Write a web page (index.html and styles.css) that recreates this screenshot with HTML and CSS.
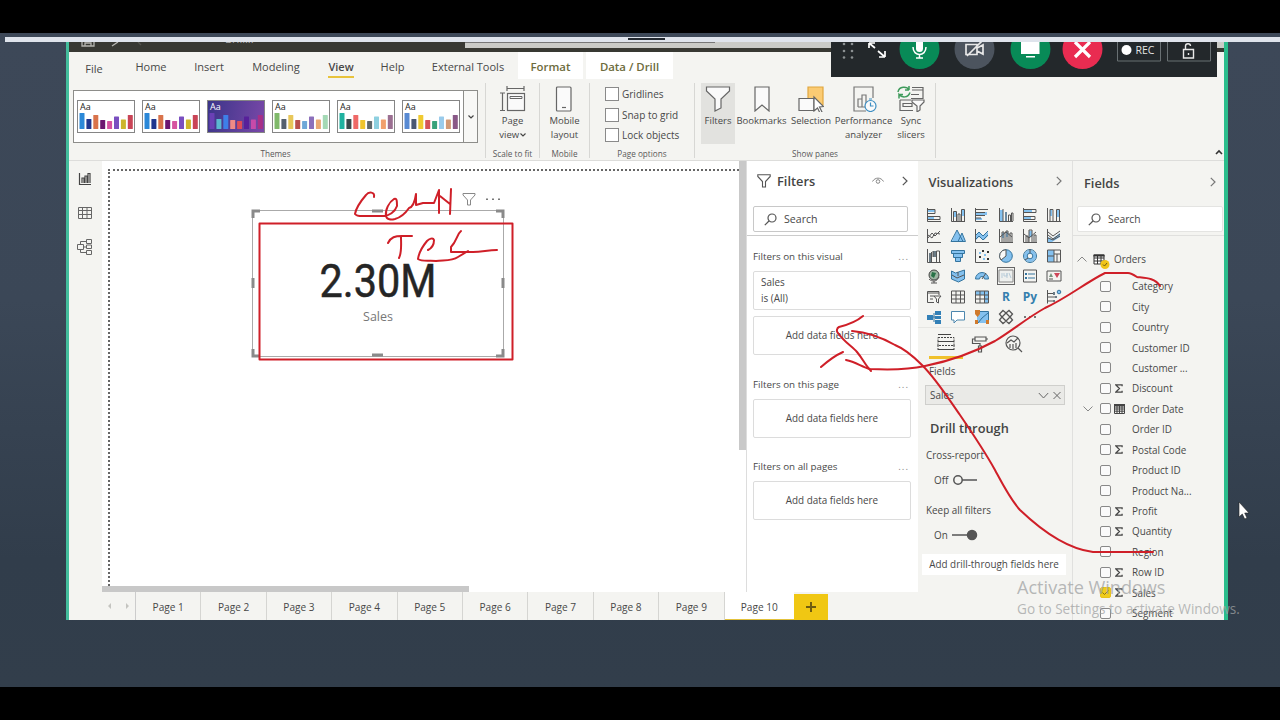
FILE: index.html
```
<!DOCTYPE html>
<html lang="en">
<head>
    <meta charset="UTF-8">
    <meta name="viewport" content="width=device-width, initial-scale=1.0">
    <title>Sales report</title>
    <link rel="stylesheet" href="styles.css">
</head>
<body>
    <div class="desktop">
        <div class="top-line"></div>
        <div class="window">
            <div class="titlebar">
                <svg class="title-icons" width="396" height="10" viewBox="0 0 396 10"><g fill="none" stroke="#b5b5b0" stroke-width="1.3"><path d="M13 0v4h12V0M16 4V1h6v3M43 4l6-4"/><path d="M69 0l3 3" stroke="#55554f"/></g></svg>
                <span class="title-text">Brill...</span>
                <div class="title-search"></div>
            </div>

            <nav class="tabs">
                <a class="tab file">File</a>
                <a class="tab home">Home</a>
                <a class="tab insert">Insert</a>
                <a class="tab modeling">Modeling</a>
                <a class="tab view active"><b>View</b></a>
                <a class="tab help">Help</a>
                <a class="tab external">External Tools</a>
                <a class="tab format tool">Format</a>
                <a class="tab drill tool">Data / Drill</a>
            </nav>

            <div class="ribbon">
                <div class="group themes">
                    <div class="gallery">
                        <div class="thumbs" id="thumbs"></div>
                        <div class="more"><svg width="6" height="4" viewBox="0 0 6 4"><path d="M.5.5L3 3 5.5.5" fill="none" stroke="#444" stroke-width="1.2"/></svg></div>
                    </div>
                    <div class="caption">Themes</div>
                </div>
                <div class="group scale">
                    <div class="tools">
                        <div class="tool-btn">
                            <svg width="26" height="26" viewBox="0 0 26 26" fill="none" stroke="#666" stroke-width="1.2"><path d="M7 2.500h17M7 0v5M24 0v5M2.500 7v17M0 7h5M0 24.500h5"/><rect x="7.500" y="7.500" width="17" height="17" fill="#fafafa"/><path d="M10 10.500h12v2H10z" stroke-width="1"/></svg>
                            <span>Page<br>view <svg width="6" height="4" viewBox="0 0 6 4"><path d="M.5.5L3 3 5.500.5" fill="none" stroke="#444" stroke-width="1.1"/></svg></span>
                        </div>
                    </div>
                    <div class="caption">Scale to fit</div>
                </div>
                <div class="group mobile">
                    <div class="tools">
                        <div class="tool-btn">
                            <svg width="26" height="26" viewBox="0 0 26 26" fill="none" stroke="#666" stroke-width="1.2"><rect x="5.500" y="1" width="14.500" height="24" rx="1" fill="#fafafa"/><path d="M11 21.500h4"/></svg>
                            <span>Mobile<br>layout</span>
                        </div>
                    </div>
                    <div class="caption">Mobile</div>
                </div>
                <div class="group options">
                    <div class="checks">
                        <label><i></i>Gridlines</label>
                        <label><i></i>Snap to grid</label>
                        <label><i></i>Lock objects</label>
                    </div>
                    <div class="caption">Page options</div>
                </div>
                <div class="group panes">
                    <div class="tools">
                        <div class="tool-btn w34 on">
                            <svg width="26" height="26" viewBox="0 0 26 26" fill="#fafafa" stroke="#666" stroke-width="1.2"><path d="M1.500 1h23v4l-8.500 8v9l-6 3V13L1.500 5z"/></svg>
                            <span>Filters</span>
                        </div>
                        <div class="tool-btn w53">
                            <svg width="26" height="26" viewBox="0 0 26 26" fill="#fafafa" stroke="#666" stroke-width="1.2"><path d="M6 1h14v24l-7-6-7 6z"/></svg>
                            <span>Bookmarks</span>
                        </div>
                        <div class="tool-btn w46">
                            <svg width="26" height="26" viewBox="0 0 26 26" fill="none" stroke="#666" stroke-width="1.200"><path d="M10 1h15v18H10z" fill="#fbcb73" stroke="#e0a63e"/><path d="M1 12.500h15v12H1z" fill="#fafafa"/><path d="M16 11v14l3.500-3 2.500 5 2-1-2.500-5 4-.5z" fill="#fff"/></svg>
                            <span>Selection</span>
                        </div>
                        <div class="tool-btn w59">
                            <svg width="26" height="26" viewBox="0 0 26 26" fill="none" stroke="#777" stroke-width="1.200"><path d="M22 12V1H3v24h12"/><path d="M7 21V13h4v8M11 21V9h4v12M7 21h8" /><circle cx="19.500" cy="20" r="5.500" fill="#fafafa" stroke="#3d8ec2"/><path d="M19.500 16.500V20h3M18 13h3" stroke="#3d8ec2"/></svg>
                            <span>Performance<br>analyzer</span>
                        </div>
                        <div class="tool-btn w36">
                            <svg width="28" height="26" viewBox="0 0 28 26" fill="none" stroke="#666" stroke-width="1.200"><path d="M15 1.500h11v11H14M15 4h11M3 14v10.500h13M14 8.500h8M3 14h11M6 17.500h9v3H6z"/><path d="M1 6C2 0 10 0 12 4V0M12 4H8M13 6.500C11 12 5 12 2 8.500v4M2 8.500h4" stroke="#3f9b5c" stroke-width="1.500"/><path d="M15 14h12v2l-4 4v4l-3 2v-6l-5-4z" fill="#fafafa"/></svg>
                            <span>Sync<br>slicers</span>
                        </div>
                    </div>
                    <div class="caption">Show panes</div>
                </div>
                <svg class="collapse" width="8" height="6" viewBox="0 0 8 6"><path d="M1 5l3-3 3 3" fill="none" stroke="#333" stroke-width="1.600"/></svg>
            </div>

            <div class="body">
                <div class="rail">
                    <svg width="14" height="14" viewBox="0 0 14 14" fill="none" stroke="#444" stroke-width="1.200"><path d="M1.500 1v11.500H13M4 11V6h2v5M7 11V4h2v7M10 11V1.500h2V11"/></svg>
                    <svg width="14" height="14" viewBox="0 0 14 14" fill="none" stroke="#666"><path d="M.5 1.500h13v11H.5zM.5 4.500h13M.5 8.500h13M4.500 1.500v11M9 1.500v11"/></svg>
                    <svg width="16" height="16" viewBox="0 0 16 16" fill="none" stroke="#666"><path d="M.5 5.500h6v5h-6zM9.500.5h5v4h-5zM9.500 6h5v3.500h-5zM9.500 11.500h5v4h-5zM3.500 5V2.500h6M6.500 8h3M3.500 11v2.500h6"/></svg>
                </div>

                <div class="main">
                    <div class="upper">
                        <div class="canvas">
                            <div class="page-area"></div>
                            <div class="vscroll"></div>
                            <div class="visual">
                                <div class="visual-tools">
                                    <svg width="14" height="13" viewBox="0 0 14 13" fill="none" stroke="#888"><path d="M1 .5h12v1.500L8.500 7v5h-3V7L1 2z"/></svg>
                                    <svg width="14" height="3" viewBox="0 0 14 3" fill="#777"><path d="M0 .5h2v1.500H0zM6 .5h2v1.500H6zM12 .5h2v1.500h-2z"/></svg>
                                </div>
                                <div class="value">2.30M</div>
                                <div class="measure">Sales</div>
                                <svg class="handles" width="254" height="149" viewBox="0 0 254 149" fill="none" stroke="#8a8a8a" stroke-width="3"><path d="M2 9V2h7M245 2h7v7M2 140v7h7M252 140v7h-7M121 2h11M121 146h11M2 69v10M252 69v10"/></svg>
                            </div>
                        </div>

                        <section class="filters">
                            <header>
                                <svg width="14" height="14" viewBox="0 0 14 14" fill="none" stroke="#555" stroke-width="1.100"><path d="M.8.8h12.400v1.700L8.500 7.500V13h-3V7.500L.8 2.500z"/></svg>
                                <h2>Filters</h2>
                                <svg class="eye" width="12" height="8" viewBox="0 0 12 8" fill="none" stroke="#888"><path d="M.5 4.500C3 0 9 0 11.500 4.500"/><circle cx="6" cy="4.500" r="1.800"/></svg>
                                <svg width="6" height="10" viewBox="0 0 6 10"><path d="M.8.8L5 5 .8 9.200" fill="none" stroke="#555" stroke-width="1.200"/></svg>
                            </header>
                            <div class="search"><svg width="13" height="13" viewBox="0 0 13 13" fill="none" stroke="#555" stroke-width="1.200"><circle cx="8" cy="5" r="4"/><path d="M5 8L.8 12.200"/></svg>Search</div>
                            <div class="filter-list">
                                <h3>Filters on this visual<span>...</span></h3>
                                <div class="card applied">Sales<br>is (All)</div>
                                <div class="card">Add data fields here</div>
                                <h3>Filters on this page<span>...</span></h3>
                                <div class="card">Add data fields here</div>
                                <h3>Filters on all pages<span>...</span></h3>
                                <div class="card">Add data fields here</div>
                            </div>
                        </section>
                    </div>

                    <div class="pages">
                        <div class="arrows"><svg width="22" height="6" viewBox="0 0 22 6" fill="#c4c4c0"><path d="M3 0v6L0 3zM18 0v6l3-3z"/></svg></div>
                        <span>Page 1</span><span>Page 2</span><span>Page 3</span><span>Page 4</span><span>Page 5</span><span>Page 6</span><span>Page 7</span><span>Page 8</span><span>Page 9</span>
                        <span class="current">Page 10</span>
                        <div class="add"><svg width="10" height="10" viewBox="0 0 10 10"><path d="M5 0v10M0 5h10" stroke="#6e5c10" stroke-width="2"/></svg></div>
                    </div>
                </div>

                <section class="viz">
                    <header><h2>Visualizations</h2><svg width="6" height="10" viewBox="0 0 6 10"><path d="M.8.8L5 5 .8 9.200" fill="none" stroke="#777" stroke-width="1.200"/></svg></header>
                    <div class="viz-grid">
                        <!-- bars and columns -->
                        <svg viewBox="0 0 16 16"><path class="b" d="M2 2h7v3H2zM2 10h6v3H2z"/><path class="k" d="M1.500 1v13.500H15M2 2.500h7v4H2M2 9.500h12v3H2"/></svg>
                        <svg viewBox="0 0 16 16"><path class="b" d="M4 4h2v6H4zM12 3h2v6h-2z"/><path class="k" d="M1.500 1v13.500H15M3.500 14V4.500h3V14M8 14V7h2v7M11.500 14V2.500h3V14"/></svg>
                        <svg viewBox="0 0 16 16"><path class="b" d="M2 5h11v3H2zM2 11h6v2H2z"/><path class="k" d="M1.500 1v13.500H13M2 2.500h12M2 5.500h9M2 8.500h9M2 11h5"/></svg>
                        <svg viewBox="0 0 16 16"><path class="b" d="M2 3h3v11H2zM7 5h2v9H7z"/><path class="k" d="M1.500 1v13.500H15M5 2v12M8 14V5M10.500 14V8h2v6M13.500 14V6h1.500v8"/></svg>
                        <svg viewBox="0 0 16 16"><path class="b" d="M2 2h8v3H2zM2 10h7v3H2z"/><path class="k" d="M1.500 1v13.500H15M2 2.500h12v3H2M2 9.500h11v3H2"/></svg>
                        <svg viewBox="0 0 16 16"><path class="b" d="M4 3h2v6H4zM11 2h2v8h-2z"/><path class="k" d="M1.500 1v13.500H15M4 14V2.500h3V14M10.500 14V2.500h3V14"/></svg>
                        <!-- lines and areas -->
                        <svg viewBox="0 0 16 16"><path class="k" d="M1.500 1v13.500H15M2 10l4-5 3 3 5-5M2 7l4 3 3-5 5 1"/></svg>
                        <svg viewBox="0 0 16 16"><path class="b" d="M2 13l5-11 3 6 2-3 3 8z"/><path class="u" d="M1 13.500L7 2l6 11.500zM8 13.500L12 5l3.500 8.500z"/></svg>
                        <svg viewBox="0 0 16 16"><path class="b" d="M2 7l3-3 4 4 5-4v4l-4 4-5-3-3 3z"/><path class="k" d="M1.500 1v13.500H15"/><path class="u" d="M2 7l3-3 4 4 5-5M2 11l3-3 4 4 5-5"/></svg>
                        <svg viewBox="0 0 16 16"><path class="b" d="M4 5h2v5H4zM8 4h2v5H8z"/><path class="k" d="M1.500 1v13.500H15M4 14V4h2v10M8 14V3h2v11M12 14V5h2v9M2 9l6-5 6 5"/></svg>
                        <svg viewBox="0 0 16 16"><path class="b" d="M7 3h3v6H7z"/><path class="k" d="M1.500 1v13.500H15M4 14V8h2v6M7 14V2h3v12M12 14V7h2v7M2 6l5 4 7-6"/></svg>
                        <svg viewBox="0 0 16 16"><path class="b" d="M2 9l4 2 8-6v4l-8 5H2z"/><path class="k" d="M1.500 1v13.500H15M2 4l5 4 7-5M2 7l5 4 7-5M2 10l5 2 7-4"/></svg>
                        <!-- waterfall, funnel, scatter, pie, donut, treemap -->
                        <svg viewBox="0 0 16 16"><path class="g" d="M3 5h2v9H3zM7 3h3v6H7z"/><path class="k" d="M1.500 1v13.500H15M5.500 4v10M7 9V3M10.500 14V3h3v11"/></svg>
                        <svg viewBox="0 0 16 16"><path class="u bb" d="M1.500 2.500h13v3h-13zM3.500 5.500h9v4h-9zM5.500 9.500h5v4h-5z"/></svg>
                        <svg viewBox="0 0 16 16"><path class="k" d="M1.500 1v13.500H15"/><path d="M8 2h2v2H8zM5 8h2v2H5zM13 3h2v2h-2zM13 10h2v2h-2z" fill="#333"/><path class="b" d="M5 4h2v2H5zM9 10h2v2H9zM10 6h2v2h-2z"/></svg>
                        <svg viewBox="0 0 16 16"><circle cx="8" cy="8" r="6.300" class="u bb"/><path class="k" d="M8 8V1.700A6.300 6.300 0 0 0 3 12z" style="fill:#fafafa"/></svg>
                        <svg viewBox="0 0 16 16"><circle cx="8" cy="8" r="4.500" fill="none" stroke="#84c1ef" stroke-width="3"/><circle class="u" cx="8" cy="8" r="6.500"/><circle class="u" cx="8" cy="8" r="2.800"/><path class="k" d="M8 1v4M3 12l3-2"/></svg>
                        <svg viewBox="0 0 16 16"><path class="b" d="M1 2h7v12H1z"/><path class="k" d="M1.500 2h13v12h-13zM8 2v12M2 8h6M8 6h6M11 6v8"/></svg>
                        <!-- maps, gauge, cards, kpi -->
                        <svg viewBox="0 0 16 16"><circle cx="8" cy="7" r="5" fill="#9eb5a2" stroke="#444"/><path class="k" d="M3 11c3 3 8 3 10-2M8 13v2M5 15h6"/><path d="M6 4l4 1-2 5-3-2z" fill="#287247"/></svg>
                        <svg viewBox="0 0 16 16"><path class="u bb" d="M1.500 3l4 2 3-1 6-2v9l-6 3-7-3z"/><path class="k" d="M2 7l5 3 7-3M8 4v4"/></svg>
                        <svg viewBox="0 0 16 16"><path class="u bb" d="M1.500 11a6.500 6.500 0 0 1 13 0h-4a2.500 2.500 0 0 0-5 0z"/><path class="k" d="M8 11l4-6"/></svg>
                        <svg class="picked" viewBox="0 0 16 16"><path d="M1 2h14v12H1z" fill="#eef0ee" stroke="#888"/><path d="M4 5v5M6 5v3h3V5v5M11 5l2 5" stroke="#b7cbd8" fill="none"/></svg>
                        <svg viewBox="0 0 16 16"><path class="k" d="M1.500 2h13v12h-13z"/><path class="u" d="M4 5v2M4 9v2" stroke-width="2"/><path class="u" d="M6 6h7M6 10h7"/></svg>
                        <svg viewBox="0 0 16 16"><path class="k" d="M1 3h14v10H1z"/><path d="M3 9l2-4 2 4z" fill="#77947d"/><path d="M8 5h6l-3 5z" fill="#ce4759"/><path class="k" d="M3 11h4"/></svg>
                        <!-- slicer, tables, scripts -->
                        <svg viewBox="0 0 16 16"><path class="k" d="M13 6V2.500H1.500v11H8M2 4h11M4 7h4M4 10h3M8 7h7l-2.500 3v4l-2-1v-3z"/></svg>
                        <svg viewBox="0 0 16 16"><path class="k" d="M1.500 2h13v12h-13zM1.500 6h13M1.500 10h13M6 2v12M10.500 2v12"/></svg>
                        <svg viewBox="0 0 16 16"><path class="b" d="M1 2h14v4H1zM10 6h4v8h-4z"/><path class="k" d="M1.500 2h13v12h-13zM1.500 6h13M1.500 10h13M6 2v12M10.500 2v12"/></svg>
                        <b>R</b>
                        <b>Py</b>
                        <svg viewBox="0 0 16 16"><path class="k" d="M1.500 1v13.500M2 4.500h6M2 8h9M2 12h5"/><path class="g" d="M7 3h2v3H7zM9 7h2v2H9zM7 11h2v2H7z"/><circle class="u bb" cx="13" cy="3" r="1.800"/></svg>
                        <!-- AI visuals -->
                        <svg viewBox="0 0 16 16"><path d="M1 6h6v5H1zM9 2h6v4H9zM9 7h6v3H9zM9 11h6v4H9z" fill="#3280b7"/><path class="u" d="M7 8h2M8 4v9"/></svg>
                        <svg viewBox="0 0 16 16"><path d="M1.500 2.500h13v8.500H7l-3 3v-3H1.500z" fill="#fff" stroke="#4d87ae"/></svg>
                        <svg viewBox="0 0 16 16"><path class="b" d="M3 3h11v11H3z"/><path class="u" d="M5 2.500h9.500V14M4 14l4-5 6-5"/><path d="M1 1h5v4L3.500 8 1 5zM12 11h3v4h-3zM1 11h3v4H1z" fill="#d07a2c"/></svg>
                        <svg viewBox="0 0 16 16"><path class="k" stroke-width="1.300" d="M5 1.500L8 4l3-2.500L14.500 5 12 8l2.500 3-3.500 3.500L8 12l-3 2.500L1.500 11 4 8 1.500 5zM8 4l4 4-4 4-4-4z"/></svg>
                        <svg viewBox="0 0 16 16"><path d="M2 7h2v2H2zM7 7h2v2H7zM12 7h2v2h-2z" fill="#777"/></svg>
                    </div>
                    <div class="viz-tabs">
                        <div class="sel"><svg width="18" height="18" viewBox="0 0 18 18" fill="none" stroke="#444"><path d="M1 1.500h13M1 16.500h16" stroke-width="1.200"/><path d="M1 4.500h16v4H1zM1 8.500h16v4H1zM1 12v5M17 12v5" stroke-dasharray="2 1"/></svg></div>
                        <div><svg width="18" height="18" viewBox="0 0 18 18" fill="none" stroke="#555" stroke-width="1.200"><path d="M4 2h11v4H4zM4 4H1.500v4.500H9V11M15 4h2M7.500 11h3v6h-3z"/></svg></div>
                        <div><svg width="18" height="18" viewBox="0 0 18 18" fill="none" stroke="#555" stroke-width="1.200"><circle cx="8" cy="8" r="7"/><path d="M13 13l4 4M2 8l4-3 3 2 4-4M5 13V9M8 14V9M11 13V8"/></svg></div>
                    </div>
                    <div class="wells">
                        <p class="well-name">Fields</p>
                        <div class="well">Sales<svg width="24" height="9" viewBox="0 0 24 9" fill="none" stroke="#666"><path d="M.8 2L5.500 7l4.700-5M15.500 1l7 7M22.500 1l-7 7"/></svg></div>
                        <h2>Drill through</h2>
                        <p class="cross">Cross-report</p>
                        <div class="toggle">Off<svg width="26" height="12" viewBox="0 0 26 12" fill="none" stroke="#555" stroke-width="1.500"><circle cx="6" cy="6" r="4.200"/><path d="M10 6h15"/></svg></div>
                        <p class="keep">Keep all filters</p>
                        <div class="toggle">On<svg width="26" height="12" viewBox="0 0 26 12" stroke="#555" stroke-width="1.500"><circle cx="20" cy="6" r="4.500" fill="#555"/><path d="M0 6h16"/></svg></div>
                        <div class="drop">Add drill-through fields here</div>
                    </div>
                </section>

                <section class="fields">
                    <header><h2>Fields</h2><svg width="6" height="10" viewBox="0 0 6 10"><path d="M.8.8L5 5 .8 9.200" fill="none" stroke="#777" stroke-width="1.200"/></svg></header>
                    <div class="search"><svg width="13" height="13" viewBox="0 0 13 13" fill="none" stroke="#555" stroke-width="1.200"><circle cx="8" cy="5" r="4"/><path d="M5 8L.8 12.200"/></svg>Search</div>
                    <div class="table-name">
                        <svg width="10" height="6" viewBox="0 0 10 6"><path d="M.5 5.500L5 1l4.500 4.500" fill="none" stroke="#888"/></svg>
                        <svg width="18" height="16" viewBox="0 0 18 16"><path d="M1 2h10v9H1zM1 5h10M1 8h10M4.500 2v9M8 2v9" fill="#fff" stroke="#333"/><path d="M.5 1.500h11v2H.5z" fill="#333"/><circle cx="12" cy="11.500" r="4.500" fill="#f0c419"/><path d="M10 11.500l1.500 1.500 2.500-3" fill="none" stroke="#6e5c10"/></svg>
                        Orders
                    </div>
                    <div id="fields"></div>
                </section>
            </div>
        </div>

        <div class="meeting">
            <svg width="386" height="35" viewBox="0 0 386 35">
                <g fill="#8b9092"><circle cx="13" cy="2" r="1.300"/><circle cx="21" cy="2" r="1.300"/><circle cx="13" cy="9" r="1.300"/><circle cx="21" cy="9" r="1.300"/><circle cx="13" cy="15.500" r="1.300"/><circle cx="21" cy="15.500" r="1.300"/></g>
                <path d="M38 1h6M38 1v5M38 1l6 5M54 15h-6M54 15V9M54 15l-7-6" fill="none" stroke="#fff" stroke-width="1.700"/>
                <g><circle cx="88.500" cy="7" r="20" fill="#088a57"/><circle cx="143.500" cy="7" r="20" fill="#4c545e"/><circle cx="199.500" cy="7" r="20" fill="#088a57"/><circle cx="251.500" cy="7" r="20" fill="#e92c51"/></g>
                <rect x="85" y="-6" width="7" height="16" rx="3.500" fill="#fff"/><path d="M82 5c0 10 13 10 13 0M88.500 12v4M85 16h7" fill="none" stroke="#fff" stroke-width="1.500"/>
                <path d="M135 2.500h11v10h-11zM146 6l6-3v9l-6-3M136 14L152-2" fill="none" stroke="#e8e8e8" stroke-width="1.700"/>
                <path d="M190-5h18.500v17H190zM195 14h9v1.500h-9z" fill="#fff"/>
                <path d="M244 0l15 15M259 0l-15 15" stroke="#fff" stroke-width="3.200"/>
                <path d="M286.500-1v20h43v-20M336.500-1v20h43v-20" fill="none" stroke="#697073"/>
                <circle cx="295.500" cy="8" r="5" fill="#fff"/><text x="304.500" y="11.500">REC</text>
                <path d="M352.500 7.500h10v8.500h-10zM354.500 7V4c0-3 5-3 5 0M357.500 11v2" fill="none" stroke="#e8e8e8" stroke-width="1.400"/>
            </svg>
        </div>

        <!-- pen annotations -->
        <svg class="ink" width="1280" height="720" viewBox="0 0 1280 720">
            <rect x="259.500" y="223.500" width="253" height="136"/>
            <path d="M374 197c1-5-5-6-8-2-6 7-10 13-11 19 2 3 7 2 12 2h16c6 0 12-4 14-10 0-5 0-8-3-7-5 3-9 11-8 17 1 4 5 4 9 3 7-2 12-8 14-11 4-1 6-7 7-14v11l7-2h11l5-13v23M440 196l10 8M451 189l-1 25"/>
            <path d="M388 243c3-6 7-7 14-7h10M401 237c0 7 1 15-2 21M428 250c4-2 6-5 6-10-1-3-5-1-7 1-5 6-8 11-9 18 4 3 12 1 18 2 9-1 16 0 22-4l10-6M461 231c-4 3-4 10-10 16v5h22c9 0 15-2 24-2"/>
            <path d="M1153 552h-60c-25-3-52-22-73-42-10-11-18-27-25-40-10-18-22-36-35-55-14-20-24-36-38-50-8-8-17-16-27-20-14-8-30-13-43-14M863 316c-7 6-16 9-24 11-2 1-3 4-1 6 6 9 14 13 19 19 6 7 8 13 14 19"/>
            <path d="M1160 286c-5-8-14-8-23-9-3-2-6-4-9-4h-23c-20 10-38 25-60 35-18 10-32 22-50 33-22 12-45 20-70 25-18 4-36 4-55 3-8-2-14-7-24-9M821 367c8-7 13-11 22-15"/>
        </svg>

        <div class="watermark">
            <div>Activate Windows</div>
            <p>Go to Settings to activate Windows.</p>
        </div>
        <svg class="cursor" width="12" height="19" viewBox="0 0 12 19"><path d="M1 1v15l3.300-3 2.400 5 2.300-1-2.300-5H11z" fill="#fff" stroke="#222" stroke-width=".6"/></svg>
    </div>

    <script>
        const palettes = [
            ["#2b88d8", "#20368f", "#d9734b", "#6b1670", "#d652a0", "#7a4fc0", "#cdb52a", "#c94456"],
            ["#2b88d8", "#20368f", "#d9734b", "#6b1670", "#d652a0", "#7a4fc0", "#cdb52a", "#c94456"],
            ["#6a40b5", "#5bb8d0", "#3e7fe8", "#f08a86", "#dd4c59", "#57209a", "#c74aa9", "#a82f86"],
            ["#80b96b", "#55606e", "#e8c75a", "#b9504d", "#6fa7d8", "#8c70bb", "#e9a873", "#a4d9b5"],
            ["#20b2a0", "#3b494b", "#ef6967", "#f0c52e", "#60696b", "#8ed0e0", "#f1a06d", "#9b6f91"],
            ["#588ad3", "#4b5872", "#f0ca30", "#d55357", "#38a27b", "#9acbeb", "#d29a75", "#895887"]
        ];
        const tops = [12, 18, 14, 19, 20, 15.5, 18.5, 14];

        document.getElementById("thumbs").innerHTML = palettes.map((colors, n) => {
            const bars = colors.map((c, i) => `<rect x="${1.5 + i * 6.9}" y="${tops[i]}" width="5" height="${28 - tops[i]}" rx=".6" fill="${c}"/>`).join("");
            return `<div class="thumb${n === 2 ? " dark" : ""}"><svg width="56" height="31">${bars}</svg><span>Aa</span></div>`;
        }).join("");

        // [name, icon]
        const fields = [
            ["Category"], ["City"], ["Country"], ["Customer ID"], ["Customer ..."],
            ["Discount", "sum"], ["Order Date", "date"], ["Order ID"], ["Postal Code", "sum"],
            ["Product ID"], ["Product Na..."], ["Profit", "sum"], ["Quantity", "sum"],
            ["Region"], ["Row ID", "sum"], ["Sales", "sum", "checked"], ["Segment"]
        ];
        const icons = {
            sum: '<svg width="8" height="9" viewBox="0 0 9 10"><path d="M8 2.500V1H1l4 4-4 4h7V7.500" fill="none" stroke="#444" stroke-width="1.400"/></svg>',
            date: '<svg width="11" height="11" viewBox="0 0 11 11"><path d="M.5 1.500h10v9H.5zM.5 4h10M.5 6h10M.5 8.200h10M3 2v8M5.500 2v8M8 2v8" fill="none" stroke="#444"/><path d="M0 1h11v2H0z" fill="#444"/></svg>'
        };
        const chevron = '<svg width="10" height="6" viewBox="0 0 10 6"><path d="M.5.5L5 5 9.500.5" fill="none" stroke="#888"/></svg>';
        const tick = '<svg width="9" height="9" viewBox="0 0 9 9"><path d="M1.500 4.500l2 2 4-4" fill="none" stroke="#8a7410"/></svg>';

        document.getElementById("fields").innerHTML = fields.map(([name, icon, checked]) =>
            `<div class="field"><span class="exp">${icon === "date" ? chevron : ""}</span><i class="${checked || ""}">${checked ? tick : ""}</i><span class="kind">${icons[icon] || ""}</span>${name}</div>`
        ).join("");
    </script>
</body>
</html>
```
FILE: styles.css
```
* {
    box-sizing: border-box;
}

body {
    margin: 0;
    background: #000;
    font-family: "Open Sans", "Noto Sans", sans-serif;
    font-size: 10.6px;
    color: #484848;
    overflow: hidden;
}

h2, h3, p {
    margin: 0;
}

svg {
    display: block;
    flex: none;
}

.desktop {
    position: relative;
    width: 1280px;
    height: 720px;
    padding-top: 37px;
    background: linear-gradient(#000 33px, #3d4858 33px, #3b4757 300px, #313d4b 560px, #323e4b 687px, #000 687px);
}

.top-line {
    height: 5px;
    margin-left: 5px;
    background: linear-gradient(90deg, transparent 623px, #242a31 623px, #242a31 660px, transparent 660px) 0 1px / 100% 2px no-repeat, #dfe4ec;
}

.window {
    width: 1162px;
    height: 578px;
    margin-left: 66px;
    border-left: 3px solid #43bd9c;
    border-right: 4px solid #2bbd8c;
    background: #f4f4f1;
    overflow: hidden;
}

/* title bar */
.titlebar {
    display: flex;
    height: 10px;
    background: #383933;
    overflow: hidden;
}

.title-icons {
    margin-right: -240px;
}

.title-text {
    width: 240px;
    margin-top: -10px;
    font-size: 11px;
    line-height: 14px;
    color: #aaa;
}

.title-search {
    flex: 1;
    height: 6px;
    background: linear-gradient(90deg, #777 250px, #cacbc7 250px) 0 0 / 100% 1px no-repeat, #cacbc7;
}

/* ribbon tabs */
.tabs {
    display: flex;
    height: 28px;
}

.tab {
    height: 27px;
    line-height: 29px;
    text-align: center;
    font-size: 11px;
    white-space: nowrap;
}

.file { width: 50px; padding-top: 2px; }
.home { width: 64px; }
.insert { width: 52px; }
.modeling { width: 82px; }
.view { width: 48px; }
.help { width: 55px; }
.external { width: 96px; }
.format { width: 65px; margin-left: 2px; }
.drill { width: 87px; margin-left: 3px; }

.active b {
    display: block;
    width: 26px;
    height: 26px;
    margin: 0 auto;
    font-weight: 600;
    border-bottom: 2px solid #e8c33c;
}

.tool {
    background: #fff;
    color: #6d6b3c;
    font-size: 11.400px;
    font-weight: 600;
}

/* ribbon */
.ribbon {
    position: relative;
    display: flex;
    height: 81px;
    padding: 3px 0 2px;
    border-bottom: 1px solid #dddddb;
}

.group {
    display: flex;
    flex-direction: column;
    justify-content: space-between;
    border-right: 1px solid #d7d7d4;
}

.themes { width: 417px; padding: 7px 7px 0 4px; }
.scale { width: 54px; }
.mobile { width: 50px; }
.options { width: 105px; }
.panes { width: 241px; }

.caption {
    height: 10px;
    margin-bottom: -1px;
    line-height: 10px;
    font-size: 8.200px;
    text-align: center;
    color: #5a5a5a;
}

.gallery {
    display: flex;
    height: 53px;
    border: 1px solid #8d8d8a;
    background: #fff;
}

.thumbs {
    display: flex;
    flex: 1;
    gap: 7px;
    padding: 9px 0 0 3px;
}

.thumb {
    position: relative;
    width: 58px;
    height: 33px;
    border: 1px solid #858585;
}

.thumb span {
    position: absolute;
    top: 0;
    left: 2px;
    font-size: 9px;
    line-height: 11px;
    color: #222;
}

.thumb.dark {
    background: linear-gradient(100deg, #3b3589, #7948a8);
}

.thumb.dark span {
    color: #fff;
}

.more {
    display: flex;
    align-items: center;
    justify-content: center;
    width: 14px;
    border-left: 1px solid #8d8d8a;
    background: #f8f8f6;
}

.tools {
    display: flex;
    justify-content: center;
}

.panes .tools {
    justify-content: flex-start;
    padding-left: 6px;
}

.tool-btn {
    display: flex;
    flex-direction: column;
    align-items: center;
    height: 61px;
    padding-top: 3px;
    font-size: 9.500px;
    line-height: 14px;
    text-align: center;
    white-space: nowrap;
}

.tool-btn span {
    margin-top: 2px;
}

.tool-btn span svg {
    display: inline-block;
    vertical-align: 1px;
    margin-left: -2px;
}

.w34 { width: 34px; }
.w53 { width: 53px; }
.w46 { width: 46px; }
.w59 { width: 59px; }
.w36 { width: 36px; }

.on {
    background: #e2e2df;
}

.checks {
    padding: 1px 0 0 15px;
}

.checks label {
    display: flex;
    align-items: center;
    height: 20.500px;
    font-size: 10px;
    white-space: nowrap;
}

.checks i {
    width: 14px;
    height: 14px;
    margin-right: 3px;
    border: 1px solid #8a8a8a;
    background: #fff;
}

.collapse {
    position: absolute;
    right: 1px;
    bottom: 5px;
}

/* body */
.body {
    display: flex;
    height: 459px;
}

.rail {
    display: flex;
    flex-direction: column;
    align-items: center;
    gap: 19.500px;
    width: 33px;
    padding: 11px 2px 0 0;
}

.main {
    display: flex;
    flex-direction: column;
    width: 816px;
}

.upper {
    display: flex;
    height: 431px;
    background: #fff;
}

.canvas {
    position: relative;
    display: flex;
    width: 645px;
    border-right: 1px solid #ddd;
    padding: 8px 0 6px 6px;
}

.canvas::after {
    content: "";
    position: absolute;
    left: 0;
    bottom: 0;
    width: 367px;
    height: 6px;
    background: #c8c8c8;
}

.page-area {
    width: 631px;
    border-top: 2px dotted #666;
    border-left: 2px dotted #666;
}

.vscroll {
    width: 7px;
    height: 289px;
    margin-top: -8px;
    background: #c9c9c9;
}

.visual {
    position: absolute;
    left: 149px;
    top: 48px;
    width: 254px;
    height: 149px;
    padding-top: 44px;
    text-align: center;
}

.visual::before {
    content: "";
    position: absolute;
    inset: 1px;
    border: 1px solid #aaa;
}

.handles {
    position: absolute;
    inset: 0;
}

.visual-tools {
    position: absolute;
    right: 5px;
    top: -16px;
    display: flex;
    align-items: center;
    gap: 10px;
}

.value {
    height: 54px;
    font-family: Roboto, sans-serif;
    font-size: 46px;
    line-height: 56px;
    font-weight: 400;
    color: #252525;
    -webkit-text-stroke: .5px #252525;
    transform: scaleX(.9);
}

.measure {
    margin-top: 1px;
    font-size: 12.500px;
    line-height: 17px;
    color: #777;
}

/* panes */
header {
    display: flex;
    align-items: center;
    height: 39px;
}

header h2, .wells h2 {
    font-size: 12.800px;
    font-weight: 600;
    color: #444;
}

.search {
    display: flex;
    align-items: center;
    gap: 7px;
    height: 26px;
    padding-left: 10px;
    border: 1px solid #c8c8c8;
    border-radius: 2px;
    background: #fff;
}

.filters {
    width: 171px;
}

.filters header {
    padding: 0 10px;
}

.filters h2 {
    flex: 1;
    margin-left: 6px;
}

.eye {
    margin-right: 18px;
}

.filters .search {
    width: 155px;
    margin: 6px 0 3px 6px;
}

.filter-list {
    padding: 10px 7px 0 6px;
    border-top: 1px solid #ccc;
}

.filter-list h3 {
    display: flex;
    justify-content: space-between;
    height: 25px;
    padding-right: 2px;
    line-height: 22px;
    font-size: 9.800px;
    font-weight: 400;
}

.filter-list h3 span {
    letter-spacing: 1px;
    color: #888;
}

.card {
    height: 39px;
    line-height: 37px;
    border: 1px solid #dcdcdc;
    border-radius: 2px;
    text-align: center;
    font-size: 9.900px;
}

.card + h3 {
    margin-top: 18.500px;
}

.card.applied {
    margin-bottom: 6px;
    padding: 3px 7px 0;
    line-height: 15.500px;
    text-align: left;
}

/* page tabs */
.pages {
    display: flex;
    height: 28px;
    line-height: 31px;
    font-size: 10.100px;
    text-align: center;
}

.arrows {
    display: flex;
    align-items: center;
    justify-content: center;
    width: 34px;
    border-right: 1px solid #ccc;
}

.pages span {
    width: 65.400px;
    border-right: 1px solid #d5d5d2;
}

.pages .current {
    width: 69.500px;
    border-right: 0;
    border-bottom: 1px solid #e3c23c;
    background: #fff;
}

.add {
    display: flex;
    align-items: center;
    justify-content: center;
    width: 34px;
    margin-top: 2px;
    background: #f0c713;
}

/* visualizations */
.viz {
    width: 155px;
    border-right: 1px solid #e0e0de;
}

.viz header {
    justify-content: space-between;
    height: 43px;
    padding: 0 10px 1px 10.500px;
}

.viz header svg, .fields header svg {
    margin-bottom: 3px;
}

.viz-grid {
    display: grid;
    grid-template-columns: repeat(6, 24px);
    grid-auto-rows: 20.400px;
    place-items: center;
    height: 124px;
    padding: 1px 0 0 4px;
    border-bottom: 1px solid #e6e6e3;
}

.viz-grid svg {
    width: 16px;
    height: 16px;
}

.viz-grid b {
    font-size: 12px;
    line-height: 16px;
    color: #357fae;
}

.k { fill: none; stroke: #555; }
.u { fill: none; stroke: #34749e; }
.b, .u.bb { fill: #84c1ef; }
.g { fill: #6b7b85; }

.viz-grid .picked {
    width: 16px;
    height: 16px;
    outline: 1.500px solid #666;
}

.viz-tabs {
    display: flex;
    height: 31px;
    padding-left: 10.500px;
}

.viz-tabs div {
    display: flex;
    align-items: center;
    justify-content: center;
    width: 34px;
}

.viz-tabs .sel {
    border-bottom: 3px solid #f0c12c;
}

.wells {
    font-size: 9.900px;
    line-height: 14px;
    white-space: nowrap;
}

.well-name {
    padding: 5px 0 7px 11px;
}

.well {
    display: flex;
    align-items: center;
    justify-content: space-between;
    width: 140px;
    height: 20px;
    margin-left: 7px;
    padding: 0 2px 0 4px;
    border: 1px solid #cfcfcc;
    background: #eaeae7;
}

.wells h2 {
    margin: 14px 0 0 12px;
    line-height: 18px;
}

.cross, .keep {
    margin-left: 8px;
    padding-top: 11px;
}

.keep {
    padding-top: 16px;
}

.toggle {
    display: flex;
    align-items: center;
    gap: 4px;
    height: 14px;
    margin: 11px 0 0 16px;
}

.drop {
    width: 144px;
    height: 21px;
    margin: 12px 0 0 4px;
    line-height: 20px;
    text-align: center;
    background: #fff;
}

/* fields */
.fields {
    flex: 1;
    overflow: hidden;
}

.fields header {
    justify-content: space-between;
    padding: 1px 8px 0 11px;
    height: 43px;
}

.fields .search {
    width: 146px;
    margin: 2px 0 3px 4px;
    border-color: #e4e4e2;
    font-size: 10.300px;
}

.table-name {
    display: flex;
    align-items: center;
    height: 41px;
    padding: 6px 0 0 4px;
    border-top: 1px solid #e0e0de;
    font-size: 9.900px;
}

.table-name svg + svg {
    margin: 4px 3px 0 6px;
}

.field {
    display: flex;
    align-items: center;
    height: 20.450px;
    padding-left: 10px;
    font-size: 9.900px;
    white-space: nowrap;
}

.exp {
    width: 17px;
}

.field i {
    width: 11px;
    height: 11px;
    border: 1px solid #888;
    border-radius: 2px;
    background: #fafafa;
}

.field i.checked {
    border-color: #e6c21c;
    background: #f0cc1c;
}

.kind {
    display: flex;
    justify-content: center;
    width: 16px;
    margin-right: 5px;
}

/* overlays */
.meeting {
    position: absolute;
    left: 831px;
    top: 42px;
    width: 386px;
    height: 35px;
    background: #23282b;
}

.meeting text {
    font-size: 10.500px;
    fill: #e4e4e4;
}

.ink {
    position: absolute;
    left: 0;
    top: 0;
    fill: none;
    stroke: #cf1f28;
    stroke-width: 2;
    stroke-linejoin: round;
    stroke-linecap: round;
}

.watermark {
    position: absolute;
    left: 1017px;
    top: 576px;
    font-size: 18.100px;
    line-height: 23px;
    white-space: nowrap;
    color: rgba(160, 162, 163, .75);
}

.watermark p {
    font-size: 13.600px;
    line-height: 19px;
}

.cursor {
    position: absolute;
    left: 1238px;
    top: 501px;
}
```
